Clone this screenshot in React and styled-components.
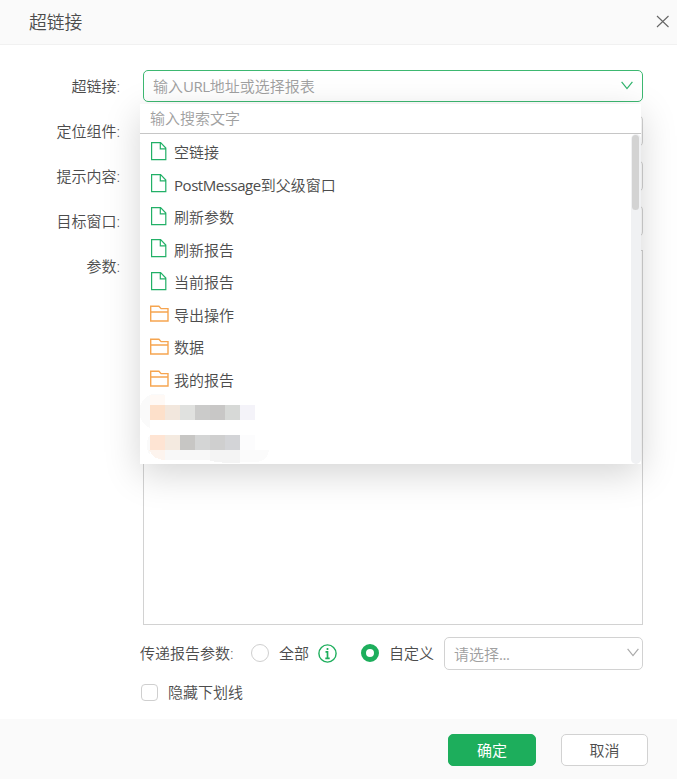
import React, { useState } from "react";
import styled, { createGlobalStyle } from "styled-components";

const GlobalStyle = createGlobalStyle`
  * {
    box-sizing: border-box;
  }

  body {
    margin: 0;
    background-color: #fff;
    color: #4c4c4c;
    font-family: "Open Sans", "Noto Sans CJK SC", sans-serif;
    font-size: 15px;
    font-weight: 350;
    line-height: 20px;
  }
`;

const Dialog = styled.div`
  display: flex;
  flex-direction: column;
  width: 677px;
  height: 779px;
  overflow: hidden;
`;

const Header = styled.div`
  display: flex;
  align-items: center;
  justify-content: space-between;
  height: 45px;
  flex-shrink: 0;
  padding: 0 7px 0 29px;
  background-color: #fafafa;
  border-bottom: 1px solid #f1f1f1;
`;

const Title = styled.span`
  font-size: 17.8px;
`;

const IconButton = styled.button`
  display: flex;
  padding: 0;
  border: none;
  background: none;
`;

const Body = styled.div`
  display: flex;
  flex-direction: column;
  flex: 1;
  padding: 25px 34px 0 0;
`;

const FormRow = styled.div`
  display: flex;
  align-items: ${(props) => props.align || "center"};
  height: ${(props) => props.height || "32px"};
  margin-bottom: ${(props) => props.gap || "13px"};
`;

const Label = styled.label`
  width: 120px;
  margin-right: 23px;
  text-align: right;
  flex-shrink: 0;
  line-height: 32px;
`;

const Field = styled.div`
  position: relative;
  display: flex;
  align-items: center;
  justify-content: space-between;
  width: ${(props) => props.width || "500px"};
  height: ${(props) => props.height || "32px"};
  padding: 0 ${(props) => props.padRight || "9px"} 0 9px;
  border: 1px solid ${(props) => (props.active ? "#3db871" : "#d2d2d2")};
  border-radius: ${(props) => props.radius || "5px"};
  color: #a0a0a0;

  & > svg {
    margin-bottom: 2px;
  }
`;

const Dropdown = styled.div`
  position: absolute;
  top: 33px;
  left: -4px;
  z-index: 2;
  width: 501px;
  height: 360px;
  background-color: #fff;
  box-shadow: 0 10px 34px rgba(0, 0, 0, 0.17);
  color: #4c4c4c;
`;

const Search = styled.div`
  height: 30px;
  padding: 0 10px;
  border-bottom: 1px solid #c6c6c6;
  color: #a0a0a0;
  line-height: 29px;
`;

const ListArea = styled.div`
  display: flex;
  height: 330px;
`;

const List = styled.div`
  flex: 1;
  padding-top: 2px;
`;

const Item = styled.div`
  display: flex;
  align-items: center;
  height: 32.5px;
  padding-left: 10px;
`;

const ItemIcon = styled.span`
  display: flex;
  width: 24px;
  margin-top: -2px;
`;

const Latin = styled.span`
  font-weight: 400;
  letter-spacing: -0.45px;
`;

const MosaicBox = styled.div`
  display: flex;
  margin-top: -2px;
`;

const Track = styled.div`
  width: 10px;
  padding: 1px 2px 0 1px;
  border-radius: 5px;
  background-color: #f0f1f3;
`;

const Thumb = styled.div`
  height: 75px;
  border-radius: 4px;
  background-color: #d3d3d3;
`;

const Options = styled.div`
  display: flex;
  align-items: center;
  height: 33px;
  padding-left: 140px;
  white-space: nowrap;
`;

const OptionLabel = styled.span`
  width: ${(props) => props.width || "auto"};
  margin-top: -1px;
  flex-shrink: 0;
`;

const Radio = styled.span`
  width: 18px;
  height: 18px;
  margin: -1px 10px 0 0;
  flex-shrink: 0;
  border: ${(props) => (props.checked ? "5px solid #1dae5c" : "1px solid #cfcfcf")};
  border-radius: 50%;
`;

const Info = styled.span`
  display: flex;
  width: 52px;
  margin-top: -1px;
  padding-left: 9px;
  flex-shrink: 0;
`;

const CheckRow = styled.div`
  display: flex;
  align-items: center;
  height: 20px;
  margin-top: 12px;
  padding-left: 141px;
`;

const Checkbox = styled.span`
  width: 17px;
  height: 17px;
  margin-right: 10px;
  border: 1px solid #cfcfcf;
  border-radius: 4px;
`;

const Footer = styled.div`
  display: flex;
  align-items: center;
  justify-content: flex-end;
  gap: 25px;
  height: 60px;
  flex-shrink: 0;
  padding: 2px 29px 0 0;
  background-color: #fafafa;
`;

const Button = styled.button`
  width: ${(props) => (props.primary ? "88px" : "87px")};
  height: 32px;
  padding: 0;
  border: 1px solid ${(props) => (props.primary ? "#1dae5c" : "#d2d2d2")};
  border-radius: 5px;
  background-color: ${(props) => (props.primary ? "#1dae5c" : "#fff")};
  color: ${(props) => (props.primary ? "#fff" : "#4c4c4c")};
  font: inherit;
  font-weight: ${(props) => (props.primary ? 400 : 350)};
`;

const Arrow = ({ color }) => (
  <svg width="12" height="9" viewBox="0 0 12 9" fill="none" stroke={color} strokeWidth="1.2">
    <path d="M.6.8 6 7.6 11.4.8" />
  </svg>
);

const FileIcon = () => (
  <svg width="18" height="19" viewBox="0 0 18 19" fill="none" stroke="#22b067" strokeWidth="1.2">
    <path d="M1.6 .6h9l5.2 5.4v11.6H1.6zM10.3 .6v6.2h5.5" />
  </svg>
);

const FolderIcon = () => (
  <svg width="19" height="17" viewBox="0 0 19 17" fill="none" stroke="#f6a550" strokeWidth="1.4">
    <path d="M.7 16V1.2h8.2l2.2 2.4H18V16zM.7 7H18" />
  </svg>
);

// blurred out report names at the end of the list
const Mosaic = () => (
  <MosaicBox>
    <svg width="140" height="72" viewBox="0 0 140 72" shapeRendering="crispEdges">
      <path d="M25 1A17 17 0 0 0 10 34V11h15z" fill="#fafafa" />
      <path d="M10 1h15v10H10z" fill="#fff9f5" />
      {["#fde0ca", "#f2e7dd", "#e0e1df", "#cbcbca", "#c8c7c6", "#d7d9d7", "#f4f3f9"].map(
        (fill, i) => (
          <rect key={i} x={10 + i * 15} y="11" width="15" height="15" fill={fill} />
        )
      )}
      <path d="M10 41a17 17 0 0 0 0 20z" fill="#fafafa" />
      {["#fee4d3", "#f4eae0", "#c7c6c4", "#d4d5d5", "#cfcfcf", "#d3d4d7", "#fcfcfd"].map(
        (fill, i) => (
          <rect key={i} x={10 + i * 15} y="41" width="15" height="15" fill={fill} />
        )
      )}
      <path d="M9 56h16v10Q14 66 9 56z" fill="#fdf4ee" />
      <path d="M25 56h45v10H25z" fill="#f8f8f8" />
      <path d="M70 56h30v13H86L70 67z" fill="#f4f4f4" />
      <path d="M100 56h29q-2 12-14 12h-15z" fill="#fbfbfb" />
    </svg>
  </MosaicBox>
);

const items = [
  { name: "空链接" },
  { latin: "PostMessage", name: "到父级窗口" },
  { name: "刷新参数" },
  { name: "刷新报告" },
  { name: "当前报告" },
  { name: "导出操作", folder: true },
  { name: "数据", folder: true },
  { name: "我的报告", folder: true },
];

const App = () => {
  const [passAll, setPassAll] = useState(false);

  return (
    <Dialog>
      <GlobalStyle />
      <Header>
        <Title>超链接</Title>
        <IconButton aria-label="close">
          <svg width="14" height="14" viewBox="0 0 14 14" stroke="#666" strokeWidth="1.1">
            <path d="M1 1l11.5 11M12.5 1L1 12" />
          </svg>
        </IconButton>
      </Header>
      <Body>
        <FormRow>
          <Label>超链接:</Label>
          <Field active>
            <span>
              输入<Latin>URL</Latin>地址或选择报表
            </span>
            <Arrow color="#2fb46c" />
            <Dropdown>
              <Search>输入搜索文字</Search>
              <ListArea>
                <List>
                  {items.map((item) => (
                    <Item key={item.name}>
                      <ItemIcon>{item.folder ? <FolderIcon /> : <FileIcon />}</ItemIcon>
                      {item.latin ? <Latin>{item.latin}</Latin> : null}
                      {item.name}
                    </Item>
                  ))}
                  <Mosaic />
                </List>
                <Track>
                  <Thumb />
                </Track>
              </ListArea>
            </Dropdown>
          </Field>
        </FormRow>
        {["定位组件:", "提示内容:", "目标窗口:"].map((label) => (
          <FormRow key={label}>
            <Label>{label}</Label>
            <Field />
          </FormRow>
        ))}
        <FormRow height="375px" align="flex-start" gap="12px">
          <Label>参数:</Label>
          <Field height="375px" radius="0" />
        </FormRow>
        <Options>
          <OptionLabel width="111px">传递报告参数:</OptionLabel>
          <Radio checked={passAll} onClick={() => setPassAll(true)} />
          <OptionLabel>全部</OptionLabel>
          <Info>
            <svg width="19" height="19" viewBox="0 0 19 19" fill="none" stroke="#1dae5c">
              <circle cx="9.5" cy="9.5" r="8.6" strokeWidth="1.4" />
              <path d="M9.5 4v2M7.5 7.9h2v6.4M7.3 14.3h4.4" strokeWidth="1.7" />
            </svg>
          </Info>
          <Radio checked={!passAll} onClick={() => setPassAll(false)} />
          <OptionLabel width="55px">自定义</OptionLabel>
          <Field width="199px" height="33px" padRight="3px">
            <span>
              请选择<Latin>...</Latin>
            </span>
            <Arrow color="#aaa" />
          </Field>
        </Options>
        <CheckRow>
          <Checkbox />
          隐藏下划线
        </CheckRow>
      </Body>
      <Footer>
        <Button primary>确定</Button>
        <Button>取消</Button>
      </Footer>
    </Dialog>
  );
};

export default App;
